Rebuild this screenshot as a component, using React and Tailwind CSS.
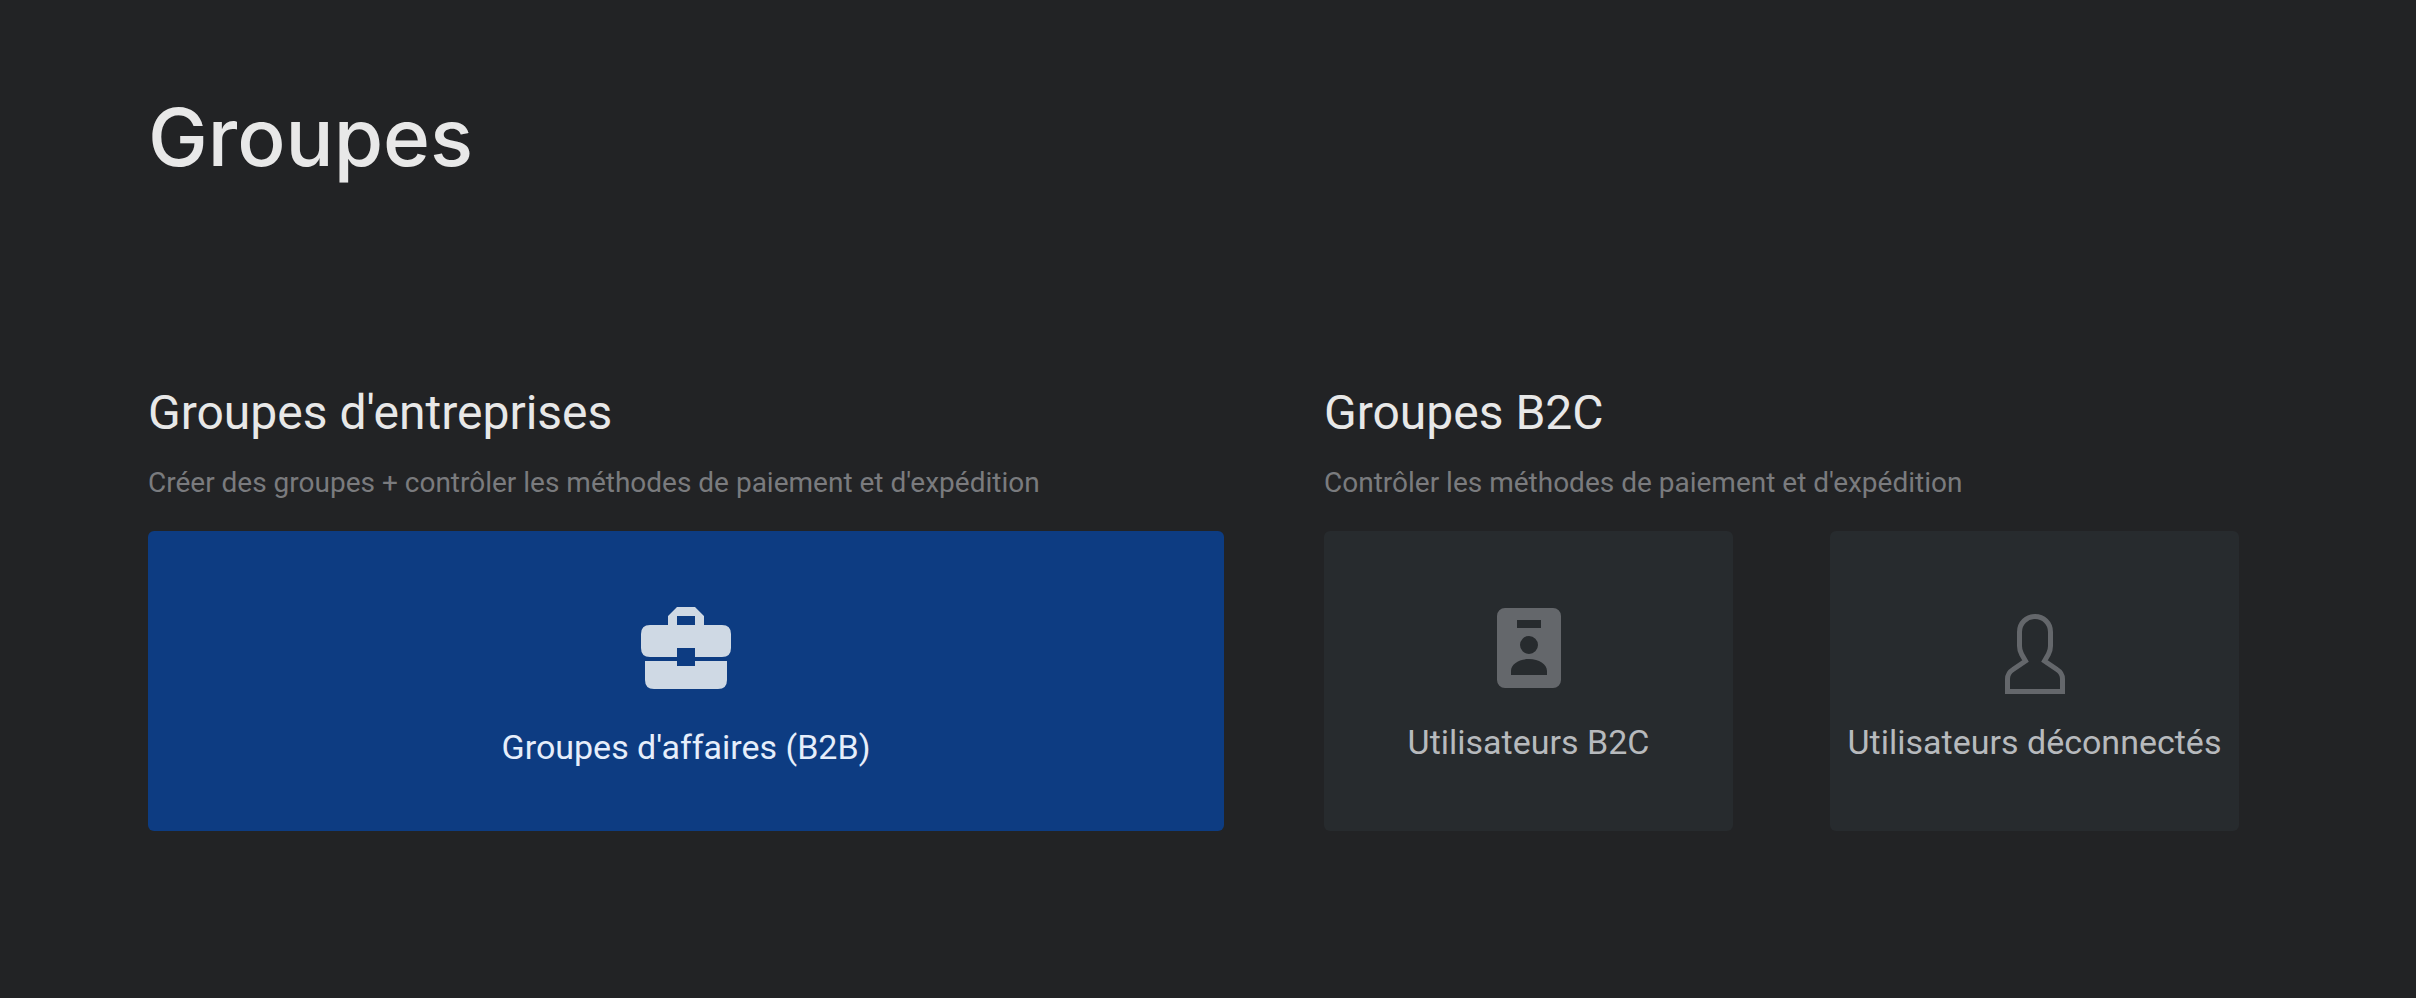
const BriefcaseIcon = () => (
  <svg viewBox="0 0 90 82" className="w-[90px] h-[82px] shrink-0" fill="currentColor" aria-hidden="true">
    <path
      fillRule="evenodd"
      d="M36 0H54L63 9V18H81Q90 18 90 27V41Q90 50 81 50H54V41H36V50H9Q0 50 0 41V27Q0 18 9 18H27V9ZM36 9V18H54V9Z"
    />
    <path d="M4 54H36V59H54V54H86V73Q86 82 77 82H13Q4 82 4 73Z" />
  </svg>
);

const BadgeIcon = () => (
  <svg viewBox="0 0 64 80" className="w-16 h-20 shrink-0" fill="currentColor" aria-hidden="true">
    <path
      fillRule="evenodd"
      d="M8 0H56A8 8 0 0 1 64 8V72A8 8 0 0 1 56 80H8A8 8 0 0 1 0 72V8A8 8 0 0 1 8 0ZM20 12V20H44V12ZM32 28A9 9 0 1 0 32 46A9 9 0 1 0 32 28ZM14 67H50V63C50 56 42 51 32 51C22 51 14 56 14 63Z"
    />
  </svg>
);

const PersonIcon = () => (
  <svg viewBox="0 0 60 80" className="w-[60px] h-20 shrink-0" fill="none" stroke="currentColor" strokeWidth="5" aria-hidden="true">
    <path d="M2.5 77.5H57.5V65C57.5 61 56 58 52 55.500L39.500 47L43.500 40C45 37 45.500 35 45.500 32V18C45.500 9 38.500 2.500 30 2.500C21.500 2.500 14.500 9 14.500 18V32C14.500 35 15 37 16.500 40L20.500 47L8 55.500C4 58 2.500 61 2.500 65Z" />
  </svg>
);

const GroupSection = ({ title, description, children }) => (
  <section>
    <h2 className="text-5xl text-[#e8e8e8]">{title}</h2>
    <p className="mt-[30px] mb-8 text-[28px] leading-8 text-[#7a7b7e]">{description}</p>
    {children}
  </section>
);

const App = () => {
  return (
    <main className="min-h-screen bg-[#222325] pl-[148px] pr-[177px] pt-24 font-[Roboto,sans-serif]">
      <h1 className="font-[Inter,sans-serif] text-[80px] leading-[82px] font-medium text-[#e8e8e8]">Groupes</h1>

      <div className="mt-[211px] grid grid-cols-[1076fr_915fr] gap-[100px]">
        <GroupSection
          title="Groupes d'entreprises"
          description="Créer des groupes + contrôler les méthodes de paiement et d'expédition"
        >
          <button className="flex h-[300px] w-full flex-col items-center rounded-md bg-[#0d3c82] pt-[76px] text-[#cfd9e4]">
            <BriefcaseIcon />
            <span className="mt-[38px] text-[34px] leading-10 text-[#e6eefb]">Groupes d'affaires (B2B)</span>
          </button>
        </GroupSection>

        <GroupSection title="Groupes B2C" description="Contrôler les méthodes de paiement et d'expédition">
          <div className="grid grid-cols-2 gap-[97px]">
            <button className="flex h-[300px] flex-col items-center rounded-md bg-[#272b2e] pt-[77px] text-[#64676b]">
              <BadgeIcon />
              <span className="mt-[34px] text-[34px] leading-10 text-[#b7babd]">Utilisateurs B2C</span>
            </button>
            <button className="flex h-[300px] flex-col items-center rounded-md bg-[#272b2e] pt-[83px] text-[#64676b]">
              <PersonIcon />
              <span className="mt-7 text-[34px] leading-10 whitespace-nowrap text-[#b7babd]">Utilisateurs déconnectés</span>
            </button>
          </div>
        </GroupSection>
      </div>
    </main>
  );
};

export default App;
